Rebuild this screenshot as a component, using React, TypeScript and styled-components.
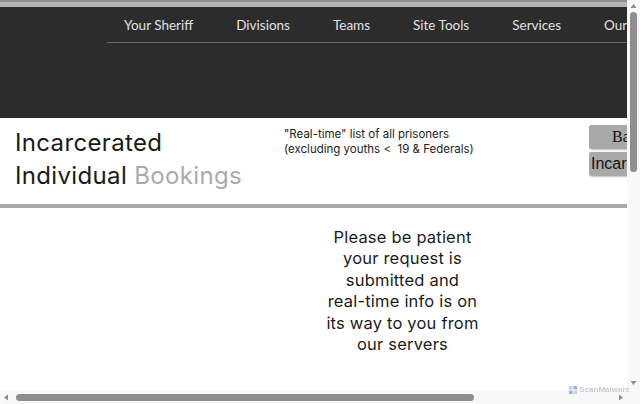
import React from 'react';
import styled, { createGlobalStyle } from 'styled-components';

const GlobalStyle = createGlobalStyle`
  html, body {
    margin: 0;
    padding: 0;
    background: #ffffff;
    overflow: hidden;
  }
  body {
    font-family: 'Inter', 'Liberation Sans', sans-serif;
  }
`;

const navItems = ['Your Sheriff', 'Divisions', 'Teams', 'Site Tools', 'Services', 'Our Office'];

const loadingLines = [
  'Please be patient',
  'your request is',
  'submitted and',
  'real-time info is on',
  'its way to you from',
  'our servers',
];

type Dir = 'up' | 'down' | 'left' | 'right';

const arrowPoints: Record<Dir, string> = {
  up: '0.5,5 3.5,1 6.5,5',
  down: '0.5,1 3.5,5 6.5,1',
  left: '5,0.5 1,3.5 5,6.5',
  right: '1,0.5 5,3.5 1,6.5',
};

function Arrow({ dir }: { dir: Dir }): React.ReactElement {
  const vertical = dir === 'up' || dir === 'down';
  return (
    <svg width={vertical ? 7 : 6} height={vertical ? 6 : 7} viewBox={vertical ? '0 0 7 6' : '0 0 6 7'}>
      <polygon points={arrowPoints[dir]} fill="#8a8a8a" />
    </svg>
  );
}

function App(): React.ReactElement {
  return (
    <>
      <GlobalStyle />
      <Frame>
        <Content>
          <Page>
            <Header>
              <Nav>
                {navItems.map((item) => (
                  <NavItem key={item}>{item}</NavItem>
                ))}
              </Nav>
            </Header>
            <TitleBar>
              <Title>
                Incarcerated
                <br />
                Individual <Muted>Bookings</Muted>
              </Title>
              <Note>
                "Real-time" list of all prisoners
                <br />
                (excluding youths &lt;&nbsp; 19 &amp; Federals)
              </Note>
              <Actions>
                <ActionButton $serif>Back</ActionButton>
                <ActionButton>Incarcerated</ActionButton>
              </Actions>
            </TitleBar>
            <Loading>
              <LoadingText>
                {loadingLines.map((line) => (
                  <div key={line}>{line}</div>
                ))}
              </LoadingText>
            </Loading>
          </Page>
        </Content>
        <Rail $vertical>
          <Arrow dir="up" />
          <Thumb $vertical $size={160} />
          <Arrow dir="down" />
        </Rail>
        <Rail>
          <Arrow dir="left" />
          <Thumb $size={458} />
          <Arrow dir="right" />
        </Rail>
        <Corner />
      </Frame>
      <Watermark>
        <svg width="8" height="8" viewBox="0 0 8 8">
          <rect x="0" y="0" width="3.5" height="3.5" fill="#c3d0ee" />
          <rect x="4.5" y="0" width="3.5" height="3.5" fill="#9bb1e2" />
          <rect x="0" y="4.5" width="3.5" height="3.5" fill="#9bb1e2" />
          <rect x="4.5" y="4.5" width="3.5" height="3.5" fill="#c3d0ee" />
        </svg>
        ScanMalware
      </Watermark>
    </>
  );
}

export default App;

const Frame = styled.div`
  display: grid;
  grid-template-columns: 627px 13px;
  grid-template-rows: 391px 13px;
  width: 640px;
  height: 404px;
  overflow: hidden;
`;

const Content = styled.div`
  overflow: hidden;
`;

const Rail = styled.div<{ $vertical?: boolean }>`
  display: flex;
  flex-direction: ${(p) => (p.$vertical ? 'column' : 'row')};
  align-items: center;
  justify-content: space-between;
  padding: ${(p) => (p.$vertical ? '3px 0 5px' : '0 3px 0 3px')};
  background: #f8f8f8;
`;

const Thumb = styled.div<{ $vertical?: boolean; $size: number }>`
  ${(p) => (p.$vertical ? `width: 7px; height: ${p.$size}px;` : `height: 7px; width: ${p.$size}px;`)}
  margin: ${(p) => (p.$vertical ? '3px 0 auto' : '0 auto 0 7px')};
  background: #8e8e8e;
  border-radius: 4px;
`;

const Corner = styled.div`
  background: #f8f8f8;
`;

const Page = styled.div`
  width: 825px;
  min-height: 900px;
  background: #ffffff;
`;

const Header = styled.header`
  height: 111px;
  background: #2c2c2c;
  border-top: 2px solid #8c8c8c;
  box-shadow: inset 0 5px 0 #b4b4b4;
  padding-top: 5px;
`;

const Nav = styled.nav`
  display: flex;
  margin-left: 107px;
  height: 35px;
  align-items: center;
  border-bottom: 1px solid #6a6a6a;
`;

const NavItem = styled.span`
  font-family: 'Lato', 'Liberation Sans', sans-serif;
  font-size: 13.5px;
  color: #e2e2e2;
  padding: 0 21.5px;
  white-space: nowrap;

  &:first-child {
    padding-left: 17px;
  }
`;

const TitleBar = styled.section`
  display: flex;
  align-items: flex-start;
  width: 805px;
  height: 86px;
  border-bottom: 4px solid #a9a9a9;
`;

const Title = styled.h1`
  margin: 8px 0 0 15px;
  width: 269px;
  font-size: 24px;
  font-weight: 400;
  line-height: 33px;
  color: #1a1a1a;
  letter-spacing: 0.35px;
`;

const Muted = styled.span`
  color: #ababab;
`;

const Note = styled.p`
  margin: 9px 0 0 0;
  width: 305px;
  font-size: 11.5px;
  line-height: 15px;
  color: #222;
`;

const Actions = styled.div`
  display: flex;
  flex-direction: column;
  align-items: flex-start;
  gap: 3px;
  margin-top: 7px;
`;

const ActionButton = styled.button<{ $serif?: boolean }>`
  width: 96px;
  height: 24px;
  border: none;
  border-radius: 2px;
  background: #a9a9a9;
  box-shadow: 1px 1px 2px rgba(0, 0, 0, 0.25);
  color: #111;
  font-size: 16px;
  font-family: ${(p) => (p.$serif ? "'Liberation Serif', serif" : "'Liberation Sans', sans-serif")};
  text-align: left;
  padding: 0 0 0 ${(p) => (p.$serif ? '23px' : '2px')};
`;

const Loading = styled.main`
  display: flex;
  justify-content: center;
  width: 805px;
  padding-top: 19px;
`;

const LoadingText = styled.div`
  text-align: center;
  font-size: 16.5px;
  line-height: 21.4px;
  color: #1c1c1c;
  letter-spacing: 0.2px;
`;

const Watermark = styled.div`
  position: fixed;
  right: 10px;
  bottom: 10px;
  display: flex;
  align-items: center;
  gap: 2px;
  font-family: 'Liberation Sans', sans-serif;
  font-size: 8px;
  font-weight: 700;
  color: #c6cad2;
  pointer-events: none;
`;
